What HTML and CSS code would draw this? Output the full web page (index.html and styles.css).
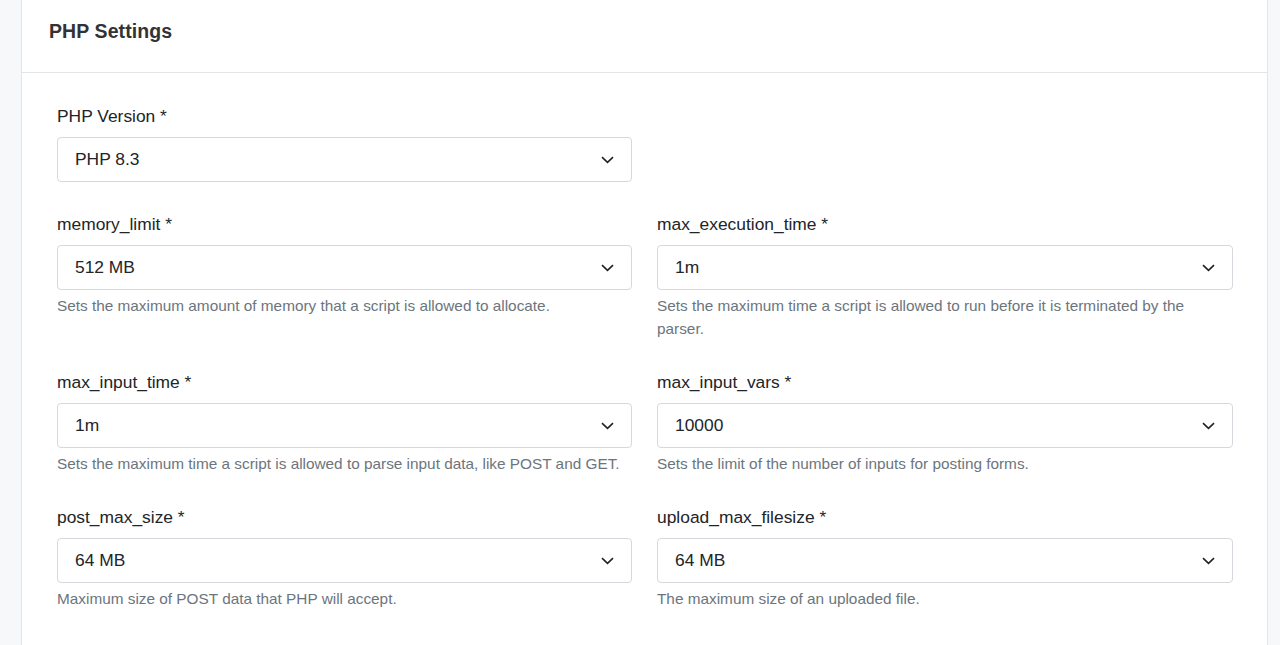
FILE: index.html
```html
<!DOCTYPE html>
<html>
<head>
<meta charset="utf-8">
<link rel="stylesheet" href="styles.css">
</head>
<body>
<div class="page">
  <div class="card">
    <div class="card-header"><h2 class="title">PHP Settings</h2></div>
    <div class="card-body">
      <div class="grid">
        <div class="field">
          <label class="label">PHP Version *</label>
          <div class="select"><span>PHP 8.3</span><svg class="chev" width="13" height="8" viewBox="0 0 13 8"><path d="M1 1.2 L6.5 6.4 L12 1.2" fill="none" stroke="#222" stroke-width="1.6"/></svg></div>
        </div>
        <div class="field"></div>

        <div class="field">
          <label class="label">memory_limit *</label>
          <div class="select"><span>512 MB</span><svg class="chev" width="13" height="8" viewBox="0 0 13 8"><path d="M1 1.2 L6.5 6.4 L12 1.2" fill="none" stroke="#222" stroke-width="1.6"/></svg></div>
          <p class="help">Sets the maximum amount of memory that a script is allowed to allocate.</p>
        </div>
        <div class="field">
          <label class="label">max_execution_time *</label>
          <div class="select"><span>1m</span><svg class="chev" width="13" height="8" viewBox="0 0 13 8"><path d="M1 1.2 L6.5 6.4 L12 1.2" fill="none" stroke="#222" stroke-width="1.6"/></svg></div>
          <p class="help">Sets the maximum time a script is allowed to run before it is terminated by the parser.</p>
        </div>

        <div class="field">
          <label class="label">max_input_time *</label>
          <div class="select"><span>1m</span><svg class="chev" width="13" height="8" viewBox="0 0 13 8"><path d="M1 1.2 L6.5 6.4 L12 1.2" fill="none" stroke="#222" stroke-width="1.6"/></svg></div>
          <p class="help">Sets the maximum time a script is allowed to parse input data, like POST and GET.</p>
        </div>
        <div class="field">
          <label class="label">max_input_vars *</label>
          <div class="select"><span>10000</span><svg class="chev" width="13" height="8" viewBox="0 0 13 8"><path d="M1 1.2 L6.5 6.4 L12 1.2" fill="none" stroke="#222" stroke-width="1.6"/></svg></div>
          <p class="help">Sets the limit of the number of inputs for posting forms.</p>
        </div>

        <div class="field">
          <label class="label">post_max_size *</label>
          <div class="select"><span>64 MB</span><svg class="chev" width="13" height="8" viewBox="0 0 13 8"><path d="M1 1.2 L6.5 6.4 L12 1.2" fill="none" stroke="#222" stroke-width="1.6"/></svg></div>
          <p class="help">Maximum size of POST data that PHP will accept.</p>
        </div>
        <div class="field">
          <label class="label">upload_max_filesize *</label>
          <div class="select"><span>64 MB</span><svg class="chev" width="13" height="8" viewBox="0 0 13 8"><path d="M1 1.2 L6.5 6.4 L12 1.2" fill="none" stroke="#222" stroke-width="1.6"/></svg></div>
          <p class="help">The maximum size of an uploaded file.</p>
        </div>
      </div>
    </div>
  </div>
</div>
</body>
</html>
```

FILE: styles.css
```css
* { box-sizing: border-box; }
html, body {
  margin: 0;
  padding: 0;
  background: #f7f8fa;
  font-family: "Liberation Sans", Arial, sans-serif;
  color: #212529;
}
.page {
  padding: 0 12px 0 21px;
  height: 645px;
  overflow: hidden;
}
.card {
  background: #fff;
  border: 1px solid #e3e5e8;
  border-top: none;
  min-height: 700px;
}
.card-header {
  height: 73px;
  border-bottom: 1px solid #e3e5e8;
  padding: 0 27px;
  display: flex;
  align-items: center;
}
.title {
  margin: 0 0 10px 0;
  font-size: 19.5px;
  font-weight: bold;
  color: #333;
  letter-spacing: 0.1px;
}
.card-body {
  padding: 32px 34px 20px 35px;
}
.grid {
  display: grid;
  grid-template-columns: 575fr 576fr;
  column-gap: 25px;
}
.field {
  margin-bottom: 31px;
}
.label {
  display: block;
  font-size: 17.4px;
  line-height: 22px;
  color: #212529;
  margin-bottom: 10px;
}
.select {
  height: 45px;
  border: 1px solid #d5d8dc;
  border-radius: 4px;
  display: flex;
  align-items: center;
  justify-content: space-between;
  padding: 0 17px 0 17px;
  font-size: 17.4px;
  color: #212529;
}
.chev { display: block; }
.help {
  margin: 4px 0 0 0;
  font-size: 15.35px;
  line-height: 23px;
  color: #6c757d;
}
```
